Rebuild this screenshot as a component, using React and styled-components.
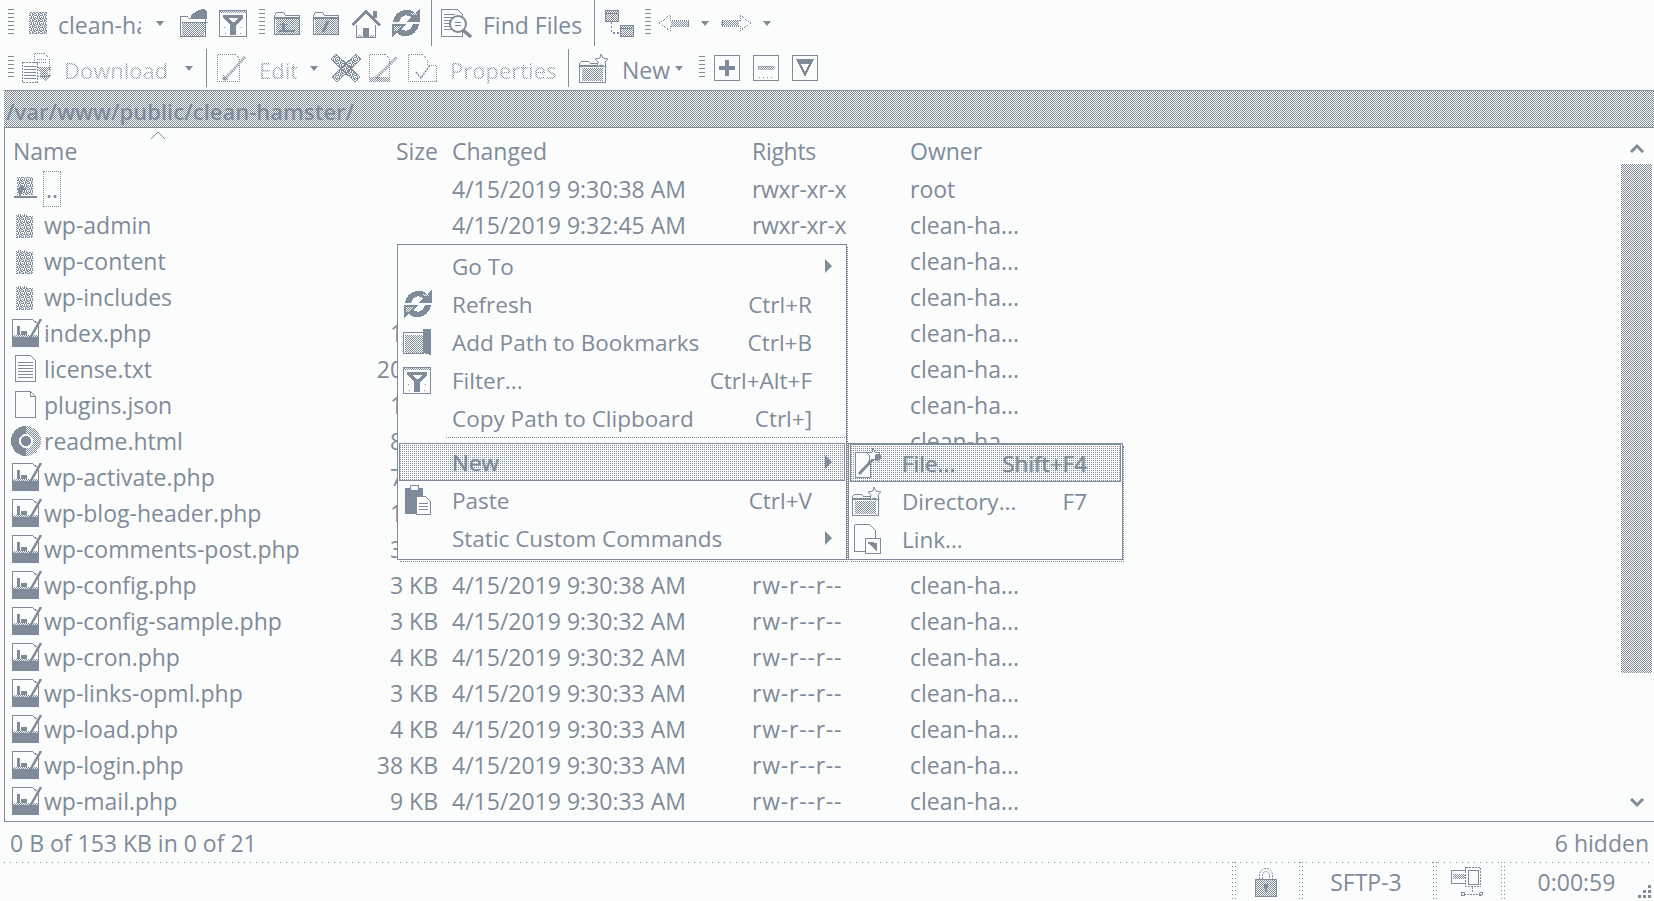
import React from "react";
import styled, { createGlobalStyle } from "styled-components";

const INK = "#7f8b99";
const PAPER = "#fbfdfd";
const CHECK = `repeating-conic-gradient(${INK} 0 25%, ${PAPER} 0 50%) 0 0 / 2px 2px`;
const FONT = `"Open Sans", "Noto Sans", sans-serif`;

const Global = createGlobalStyle`
  html, body { margin: 0; padding: 0; background: ${PAPER}; overflow: hidden; }
  body { font-family: ${FONT}; color: ${INK}; }
`;

const Window = styled.div`
  position: relative;
  width: 1654px;
  height: 901px;
  display: flex;
  flex-direction: column;
  overflow: hidden;
  font-size: 23px;
`;

const Toolbar = styled.div`
  display: flex;
  align-items: center;
  height: ${(p) => p.$h}px;
  flex: none;
`;

const Slot = styled.div`
  margin-left: ${(p) => p.$ml || 0}px;
  flex: none;
  display: flex;
  align-items: center;
`;

const Grip = styled.div`
  margin-left: ${(p) => p.$ml || 0}px;
  width: 6px;
  height: ${(p) => p.$h || 28}px;
  flex: none;
  background: repeating-linear-gradient(${INK} 0 1px, transparent 1px 4px);
`;

const Sep = styled.div`
  margin-left: ${(p) => p.$ml || 0}px;
  width: 1px;
  height: ${(p) => p.$h}px;
  flex: none;
  background: ${INK};
`;

const Caret = styled.div`
  margin-left: ${(p) => p.$ml || 0}px;
  width: 0;
  height: 0;
  flex: none;
  border-left: 4.5px solid transparent;
  border-right: 4.5px solid transparent;
  border-top: 5px solid ${INK};
`;

const Label = styled.div`
  margin-left: ${(p) => p.$ml || 0}px;
  width: ${(p) => p.$w}px;
  flex: none;
  overflow: hidden;
  white-space: nowrap;
  line-height: 30px;
  padding-top: 4px;
  ${(p) =>
    p.$dim &&
    `
    font-size: 22px;
    background: repeating-conic-gradient(${INK} 0 25%, ${PAPER} 0 50%) 0 0 / 2px 2px;
    -webkit-background-clip: text;
    background-clip: text;
    color: transparent;
  `}
`;

const PathBar = styled.div`
  height: 38px;
  margin-left: 4px;
  flex: none;
  box-sizing: border-box;
  border-top: 1px solid ${INK};
  border-bottom: 1px solid ${INK};
  background: ${CHECK};
  padding: 2px 0 0 2px;
  line-height: 36px;
  font-size: 22px;
  font-weight: 600;
`;

const Panel = styled.div`
  position: relative;
  flex: none;
  height: 694px;
  margin-left: 4px;
  box-sizing: border-box;
  border-left: 1px solid ${INK};
  border-bottom: 1px solid ${INK};
`;

const Row = styled.div`
  display: flex;
  align-items: center;
  height: 36px;
  padding-bottom: 3px;
  box-sizing: border-box;
  white-space: nowrap;
`;

const HeaderRow = styled(Row)`
  height: 44px;
  padding-top: 4px;
`;

const NameCell = styled.div`
  width: 371px;
  flex: none;
  display: flex;
  align-items: center;
  padding-left: ${(p) => p.$pad || 5}px;
  box-sizing: border-box;
`;

const Name = styled.span`
  margin-left: 2px;
  ${(p) => p.$focus && `outline: 1px dotted ${INK}; outline-offset: 0; padding: 1px 2px;`}
`;

const SizeCell = styled.div`
  width: 62px;
  flex: none;
  text-align: right;
`;

const ChangedCell = styled.div`
  width: 300px;
  flex: none;
  margin-left: 14px;
`;

const RightsCell = styled.div`
  width: 158px;
  flex: none;
  letter-spacing: ${(p) => (p.$dir ? "-0.3px" : "0.8px")};
`;

const OwnerCell = styled.div`
  flex: none;
`;

const SortMark = styled.svg`
  position: absolute;
  left: 145px;
  top: 3px;
`;

const Thumb = styled.div`
  position: absolute;
  right: 2px;
  top: 36px;
  width: 31px;
  height: 509px;
  background: ${CHECK};
`;

const Chevron = styled.svg`
  position: absolute;
  right: 9px;
  top: ${(p) => p.$top}px;
`;

const StatusTop = styled.div`
  flex: none;
  height: 40px;
  display: flex;
  align-items: center;
  justify-content: space-between;
  padding: 2px 5px 0 10px;
  box-sizing: border-box;
`;

const StatusBottom = styled.div`
  flex: none;
  height: 39px;
  margin-left: 4px;
  display: flex;
  justify-content: flex-end;
  background: repeating-linear-gradient(90deg, ${INK} 0 1px, transparent 1px 6px) 0 0 / 100% 1px no-repeat;
  position: relative;
`;

const StatusCell = styled.div`
  width: ${(p) => p.$w}px;
  flex: none;
  display: flex;
  align-items: center;
  justify-content: center;
  box-sizing: border-box;
  background:
    repeating-linear-gradient(${INK} 0 1px, transparent 1px 4px) 0 0 / 1px 100% no-repeat,
    repeating-linear-gradient(${INK} 0 1px, transparent 1px 4px) 3px 0 / 1px 100% no-repeat;
  padding-right: ${(p) => p.$pr || 0}px;
`;

const ResizeGrip = styled.svg`
  position: absolute;
  right: 2px;
  bottom: 1px;
`;

const Menu = styled.div`
  position: absolute;
  left: ${(p) => p.$x}px;
  top: ${(p) => p.$y}px;
  width: ${(p) => p.$w}px;
  height: ${(p) => p.$h}px;
  padding: ${(p) => p.$pad}px 1px 0;
  box-sizing: border-box;
  background: ${PAPER};
  border: 1px solid ${INK};
  font-size: 22.5px;
  &::after {
    content: "";
    position: absolute;
    left: 2px;
    top: 2px;
    right: -2px;
    bottom: -3px;
    border-right: 1px dotted ${INK};
    border-bottom: 1px dotted ${INK};
    pointer-events: none;
  }
`;

const MenuRow = styled.div`
  position: relative;
  display: flex;
  align-items: center;
  height: 38px;
  box-sizing: border-box;
  white-space: nowrap;
  ${(p) =>
    p.$active &&
    `
    outline: 1px solid ${INK};
    outline-offset: -1px;
    background: conic-gradient(${INK} 25%, transparent 0) 0 0 / 2px 2px, ${PAPER};
    text-shadow: 0 0 1px ${INK};
  `}
`;

const MenuIcon = styled.div`
  width: ${(p) => p.$w}px;
  padding-left: ${(p) => p.$pl}px;
  box-sizing: border-box;
  flex: none;
  display: flex;
  justify-content: flex-start;
`;

const MenuText = styled.div`
  flex: 1;
`;

const MenuKey = styled.div`
  flex: none;
  margin-right: ${(p) => p.$mr}px;
`;

const MenuArrow = styled.div`
  position: absolute;
  right: 13px;
  top: 50%;
  margin-top: -7px;
  width: 0;
  height: 0;
  border-top: 7px solid transparent;
  border-bottom: 7px solid transparent;
  border-left: 7px solid ${INK};
`;

const MenuRule = styled.div`
  height: 6px;
  margin-left: 47px;
  box-sizing: border-box;
  border-top: 1px dotted ${INK};
`;

const PatternDefs = styled.svg`
  position: absolute;
  width: 0;
  height: 0;
`;

const Glyph = ({ w = 30, h = 30, vw, vh, children }) => (
  <svg
    width={w}
    height={h}
    viewBox={`0 0 ${vw || w} ${vh || h}`}
    fill="none"
    stroke={INK}
    strokeWidth="1"
    shapeRendering="crispEdges"
    style={{ display: "block", flex: "none" }}
  >
    {children}
  </svg>
);

// file list icons
const DirIcon = () => (
  <Glyph w={32} h={32}>
    <path d="M6 5h9l2 2h6v22H6z" fill="url(#nz)" stroke="none" />
  </Glyph>
);
const UpDirIcon = () => (
  <Glyph w={32} h={32}>
    <path d="M7 4h16v18H7z" fill="url(#nz)" stroke="none" />
    <path d="M5 22h5v-6H7l5-5 5 5h-3v2h-2v4h16v2H5z" fill={INK} stroke="none" transform="translate(-1 1)" />
  </Glyph>
);
const PhpIcon = () => (
  <Glyph w={32} h={32}>
    <path d="M2.500 2.500h20l6 5v22h-26z" fill={PAPER} />
    <path d="M3 20h25v9H3z" fill={INK} stroke="none" />
    <path d="M3 18h25v2H3z" fill="url(#dt)" stroke="none" />
    <path d="M7 9h3v9H7zM11 14h6v4h-6z" fill={INK} stroke="none" />
    <path d="M19 23L31 2" stroke={INK} strokeWidth="2.500" shapeRendering="auto" />
  </Glyph>
);
const TextIcon = () => (
  <Glyph w={32} h={32}>
    <path d="M5.500 2.500h15l5 5v21h-20z" />
    <path d="M8 9.500h15M8 12.500h15M8 15.500h15M8 18.500h15M8 21.500h15M8 24.500h15" />
  </Glyph>
);
const BlankIcon = () => (
  <Glyph w={32} h={32}>
    <path d="M5.500 2.500h15l5 5v21h-20z" />
    <path d="M20.500 2.500v5h5" />
  </Glyph>
);
const WebIcon = () => (
  <Glyph w={32} h={32}>
    <circle cx="16" cy="16" r="15" fill="url(#dt)" stroke="none" />
    <path d="M16 1A15 15 0 0 0 16 31z" fill={INK} stroke="none" />
    <circle cx="16" cy="16" r="7" fill={PAPER} stroke="none" />
    <circle cx="16" cy="16" r="5" fill={INK} stroke="none" />
  </Glyph>
);

// toolbar icons
const SmallDir = () => (
  <Glyph w={18} h={24}>
    <path d="M0 1h18v22H0z" fill="url(#nz)" stroke="none" />
  </Glyph>
);
const OpenDir = () => (
  <Glyph w={30} h={30}>
    <path d="M1.500 8.500h7l2 2h16v18h-25z" />
    <path d="M3 15h24l-2 13H3z" fill="url(#dt)" stroke="none" />
    <path d="M12 8c3-4 8-7 13-7l3 2v8H13z" fill={INK} stroke="none" />
    <path d="M2.500 14.500h26" />
  </Glyph>
);
const FilterIcon = () => (
  <Glyph w={28} h={27}>
    <path d="M.5.500h27v26H.5z" fill={PAPER} />
    <path d="M1 1h26v2H1z" fill="url(#dt)" stroke="none" />
    <path d="M4 5h20v3l-7 7v10h-6V15L4 8z" fill={INK} stroke="none" />
    <path d="M9 8h10l-4 4h-2z" fill={PAPER} stroke="none" />
    <path d="M5 17h1v1H5zM22 17h1v1h-1zM6 23h1v1H6zM21 23h1v1h-1z" fill={INK} stroke="none" />
  </Glyph>
);
const TabDir = ({ children }) => (
  <Glyph w={26} h={24}>
    <path d="M.5 4.500l2-3h7l2 3h14v19H.5z" fill={PAPER} />
    <path d="M1 6h24v2H1z" fill={INK} stroke="none" />
    <path d="M2 8h23v15H2z" fill="url(#dt)" stroke="none" />
    {children}
  </Glyph>
);
const ParentDir = () => (
  <TabDir>
    <path d="M5 19h16v2H5zM8 12h3v8H8zM6 13h7v1H6z" fill={INK} stroke="none" />
  </TabDir>
);
const RootDir = () => (
  <TabDir>
    <path d="M15 10l-5 11" stroke={INK} strokeWidth="3" shapeRendering="auto" />
  </TabDir>
);
const HomeIcon = () => (
  <Glyph w={32} h={30}>
    <path d="M1 16L16 2l15 14-2 2L16 6 3 18z" fill={INK} stroke="none" />
    <path d="M6.500 16.500v13h19v-13" />
    <path d="M13 20h6v10h-6z" fill={INK} stroke="none" />
    <path d="M23 3h4v7h-4z" fill={INK} stroke="none" />
    <path d="M8 27h4v2H8zM20 27h4v2h-4z" fill="url(#dt)" stroke="none" />
  </Glyph>
);
const RefreshIcon = () => (
  <Glyph w={30} h={30}>
    <path d="M2 14C3 6 10 1 17 2c3 0 5 1 7 3l5-4v13H15l5-5c-5-3-10-2-12 5z" fill={INK} stroke="none" />
    <path d="M28 16c-1 8-8 13-15 12-3 0-5-1-7-3l-5 4V16h14l-5 5c5 3 10 2 12-5z" fill={INK} stroke="none" />
    <path d="M3 18h8l-5 5H3z" fill="url(#pt)" stroke="none" />
    <path d="M20 5h6v2h-6z" fill="url(#pt)" stroke="none" />
  </Glyph>
);
const FindIcon = () => (
  <Glyph w={32} h={30}>
    <path d="M.5 1.500h16l5 5v22H.5z" />
    <path d="M3 6.500h11M3 9.500h11M3 12.500h7M3 15.500h7M3 18.500h7M3 21.500h7" />
    <circle cx="17" cy="16" r="8" fill={PAPER} strokeWidth="2" shapeRendering="auto" />
    <path d="M14 14.500h6M14 17.500h6" />
    <path d="M22 22l8 7" strokeWidth="3.500" shapeRendering="auto" />
  </Glyph>
);
const TreeIcon = () => (
  <Glyph w={30} h={30}>
    <path d="M1.500 2.500h13v11h-13z" fill="url(#dt)" />
    <path d="M1.500 5.500h13" />
    <path d="M16.500 17.500h13v11h-13z" fill="url(#dt)" />
    <path d="M16.500 20.500h13" />
    <path d="M7.500 14v11h8" strokeDasharray="2 2" strokeWidth="1.500" />
  </Glyph>
);
const BackIcon = () => (
  <Glyph w={30} h={18}>
    <path d="M.5 9L11 1v5h18v6H11v5z" strokeDasharray="1 1" />
    <path d="M12 7h18v5H12z" fill="url(#dt)" stroke="none" />
  </Glyph>
);
const ForwardIcon = () => (
  <Glyph w={30} h={18}>
    <path d="M29.500 9L19 1v5H1v6h18v5z" strokeDasharray="1 1" />
    <path d="M0 7h18v5H0z" fill="url(#dt)" stroke="none" />
  </Glyph>
);
const DownloadIcon = () => (
  <Glyph w={30} h={30}>
    <path d="M12.500.5h10l5 5v18h-15z" strokeDasharray="1 1" />
    <path d="M.5 9.500h15v20H.5z" fill={PAPER} strokeDasharray="2 1" />
    <path d="M2 13.500h12M2 16.500h12M2 19.500h12M2 22.500h12M2 25.500h12" />
    <path d="M15 6.500h10M15 9.500h10" strokeDasharray="1 1" />
    <path d="M16 14h13v3h-3v5h3l-6 7-7-7h3z" fill="url(#dt)" stroke="none" />
  </Glyph>
);
const EditIcon = () => (
  <Glyph w={30} h={30}>
    <path d="M.5 1.500h18l4 4v23H.5z" strokeDasharray="1 1" />
    <path d="M7 27L28 4" stroke={INK} strokeWidth="3" strokeDasharray="1 1" shapeRendering="auto" />
    <path d="M6 21l6 6H5z" fill="url(#dt)" stroke="none" />
  </Glyph>
);
const DeleteIcon = () => (
  <Glyph w={30} h={30}>
    <path d="M5 1l24 23-5 5L0 6z" fill="url(#nz)" />
    <path d="M25 1L1 24l5 5L30 6z" fill="url(#nz)" />
  </Glyph>
);
const EditTwoIcon = () => (
  <Glyph w={30} h={30}>
    <path d="M.5 1.500h16l4 4v23H.5z" strokeDasharray="1 1" />
    <path d="M1 24h19v4H1z" fill="url(#dt)" stroke="none" />
    <path d="M7 25L28 4" stroke={INK} strokeWidth="3" strokeDasharray="1 1" shapeRendering="auto" />
  </Glyph>
);
const PropsIcon = () => (
  <Glyph w={30} h={30}>
    <path d="M.5 1.500h14l5 5v6" strokeDasharray="1 1" />
    <path d="M.5 1.500v27h28v-16h-9" strokeDasharray="1 1" />
    <path d="M8 19l5 6 9-13" stroke={INK} strokeWidth="1.500" strokeDasharray="2 1" shapeRendering="auto" />
  </Glyph>
);
const NewDirIcon = () => (
  <Glyph w={30} h={30}>
    <path d="M.5 10.500l2-2h7l2 2h15v19H.5z" fill={PAPER} />
    <path d="M1 12h25v2H1z" fill={INK} stroke="none" />
    <path d="M3 15h21v13H3z" fill="url(#dt)" stroke="none" />
    <path d="M22 1l2 4 5 1-3 3 1 5-5-2-4 2 1-5-3-3 5-1z" fill={PAPER} shapeRendering="auto" />
  </Glyph>
);
const BoxIcon = ({ children }) => (
  <Glyph w={26} h={26}>
    <path d="M.5.500h25v25H.5z" />
    {children}
  </Glyph>
);
const PlusIcon = () => (
  <BoxIcon>
    <path d="M11 5h4v6h6v4h-6v6h-4v-6H5v-4h6z" fill={INK} stroke="none" />
  </BoxIcon>
);
const MinusIcon = () => (
  <BoxIcon>
    <path d="M5 11h16v3H5z" fill="url(#dt)" stroke={INK} strokeWidth=".5" />
    <path d="M6 22h1M10 22h1M14 22h1M18 22h1" />
  </BoxIcon>
);
const InvertIcon = () => (
  <BoxIcon>
    <path d="M4 4h18l-9 18zM9 9l4 8 4-8z" fill={INK} fillRule="evenodd" stroke="none" />
  </BoxIcon>
);

// menu icons
const BookmarkIcon = () => (
  <Glyph w={30} h={26}>
    <path d="M.5 3.500h20v21H.5z" />
    <path d="M2 6h18v18H2z" fill="url(#dt)" stroke="none" />
    <path d="M20 0h8v26l-8-2z" fill={INK} stroke="none" />
  </Glyph>
);
const PasteIcon = () => (
  <Glyph w={30} h={32}>
    <path d="M2 4h18v26H2z" fill={INK} stroke="none" />
    <path d="M7 1h8v5H7z" fill={PAPER} stroke={INK} />
    <path d="M5 8h14v6H5z" fill="url(#dt)" stroke="none" />
    <path d="M13.500 12.500h9l5 5v13h-14z" fill={PAPER} />
    <path d="M16 19.500h9M16 22.500h9M16 25.500h9" />
  </Glyph>
);
const NewFileIcon = () => (
  <Glyph w={32} h={32}>
    <path d="M3.500 5.500h15v25h-15z" fill={PAPER} />
    <path d="M7 27L24 9" stroke={INK} strokeWidth="3" shapeRendering="auto" />
    <path d="M21 1l2 4 5 1-3 3 1 5-5-2-4 2 1-5-3-3 5-1z" fill={PAPER} />
    <circle cx="26" cy="10" r="3" fill={INK} stroke="none" />
  </Glyph>
);
const LinkIcon = () => (
  <Glyph w={32} h={32}>
    <path d="M2.500 1.500h15l6 6v14M2.500 1.500v27h10" />
    <path d="M13.500 15.500h15v15h-15z" fill={PAPER} />
    <path d="M16 19h3l6 1v8l-3-2-3-4-3-1z" fill={INK} stroke="none" />
  </Glyph>
);
const LockIcon = () => (
  <Glyph w={24} h={32}>
    <path d="M5.500 13V9a6.500 6.500 0 0 1 13 0v4M8.500 13V9a3.500 3.500 0 0 1 7 0v4" strokeDasharray="2 1" shapeRendering="auto" />
    <path d="M1.500 13.500h21v17h-21z" fill="url(#dt)" />
    <path d="M10 18h4v3l-1 2v3h-2v-3l-1-2z" fill={INK} stroke="none" />
  </Glyph>
);
const NetIcon = () => (
  <Glyph w={32} h={32}>
    <path d="M.5 4.500h15v13H.5z" fill={PAPER} />
    <path d="M2 8h12v5H2z" fill="url(#dt)" stroke="none" />
    <path d="M14.500 1.500h15v19h-15z" fill={PAPER} strokeDasharray="2 1" />
    <path d="M17 4h10v14H17z" fill={PAPER} />
    <path d="M21 21v6M13 28h17" strokeDasharray="2 1" />
    <circle cx="12" cy="28" r="2" />
    <circle cx="30" cy="28" r="1.500" />
  </Glyph>
);

const php = <PhpIcon />;
const dir = <DirIcon />;
const rows = [
  { icon: <UpDirIcon />, name: "..", focus: true, changed: "4/15/2019 9:30:38 AM", rights: "rwxr-xr-x", owner: "root" },
  { icon: dir, name: "wp-admin", changed: "4/15/2019 9:32:45 AM", rights: "rwxr-xr-x", owner: "clean-ha..." },
  { icon: dir, name: "wp-content", changed: "4/15/2019 9:30:32 AM", rights: "rwxr-xr-x", owner: "clean-ha..." },
  { icon: dir, name: "wp-includes", changed: "4/15/2019 9:30:33 AM", rights: "rwxr-xr-x", owner: "clean-ha..." },
  { icon: php, name: "index.php", size: "1 KB", changed: "4/15/2019 9:30:38 AM", rights: "rw-r--r--", owner: "clean-ha..." },
  { icon: <TextIcon />, name: "license.txt", size: "20 KB", changed: "4/15/2019 9:30:38 AM", rights: "rw-r--r--", owner: "clean-ha..." },
  { icon: <BlankIcon />, name: "plugins.json", size: "1 KB", changed: "4/15/2019 9:30:38 AM", rights: "rw-r--r--", owner: "clean-ha..." },
  { icon: <WebIcon />, name: "readme.html", size: "8 KB", changed: "4/15/2019 9:30:38 AM", rights: "rw-r--r--", owner: "clean-ha..." },
  { icon: php, name: "wp-activate.php", size: "7 KB", changed: "4/15/2019 9:30:38 AM", rights: "rw-r--r--", owner: "clean-ha..." },
  { icon: php, name: "wp-blog-header.php", size: "1 KB", changed: "4/15/2019 9:30:38 AM", rights: "rw-r--r--", owner: "clean-ha..." },
  { icon: php, name: "wp-comments-post.php", size: "3 KB", changed: "4/15/2019 9:30:38 AM", rights: "rw-r--r--", owner: "clean-ha..." },
  { icon: php, name: "wp-config.php", size: "3 KB", changed: "4/15/2019 9:30:38 AM", rights: "rw-r--r--", owner: "clean-ha..." },
  { icon: php, name: "wp-config-sample.php", size: "3 KB", changed: "4/15/2019 9:30:32 AM", rights: "rw-r--r--", owner: "clean-ha..." },
  { icon: php, name: "wp-cron.php", size: "4 KB", changed: "4/15/2019 9:30:32 AM", rights: "rw-r--r--", owner: "clean-ha..." },
  { icon: php, name: "wp-links-opml.php", size: "3 KB", changed: "4/15/2019 9:30:33 AM", rights: "rw-r--r--", owner: "clean-ha..." },
  { icon: php, name: "wp-load.php", size: "4 KB", changed: "4/15/2019 9:30:33 AM", rights: "rw-r--r--", owner: "clean-ha..." },
  { icon: php, name: "wp-login.php", size: "38 KB", changed: "4/15/2019 9:30:33 AM", rights: "rw-r--r--", owner: "clean-ha..." },
  { icon: php, name: "wp-mail.php", size: "9 KB", changed: "4/15/2019 9:30:33 AM", rights: "rw-r--r--", owner: "clean-ha..." },
];

const menuItems = [
  { text: "Go To", arrow: true },
  { text: "Refresh", key: "Ctrl+R", icon: <RefreshIcon /> },
  { text: "Add Path to Bookmarks", key: "Ctrl+B", icon: <BookmarkIcon /> },
  { text: "Filter...", key: "Ctrl+Alt+F", icon: <FilterIcon /> },
  { text: "Copy Path to Clipboard", key: "Ctrl+]" },
  { rule: true },
  { text: "New", arrow: true, active: true },
  { text: "Paste", key: "Ctrl+V", icon: <PasteIcon /> },
  { text: "Static Custom Commands", arrow: true },
];

const subItems = [
  { text: "File...", key: "Shift+F4", icon: <NewFileIcon />, active: true },
  { text: "Directory...", key: "F7", icon: <NewDirIcon /> },
  { text: "Link...", icon: <LinkIcon /> },
];

export default function App() {
  return (
    <Window>
      <Global />
      <PatternDefs>
        <defs>
          <pattern id="dt" width="2" height="2" patternUnits="userSpaceOnUse">
            <rect width="1" height="1" fill={INK} />
            <rect x="1" y="1" width="1" height="1" fill={INK} />
          </pattern>
          <pattern id="pt" width="2" height="2" patternUnits="userSpaceOnUse">
            <rect width="2" height="2" fill={PAPER} />
            <rect width="1" height="1" fill={INK} />
            <rect x="1" y="1" width="1" height="1" fill={INK} />
          </pattern>
          <pattern id="nz" width="6" height="6" patternUnits="userSpaceOnUse">
            <path d="M0 0h1v1H0zM2 0h1v1H2zM4 0h1v1H4zM1 1h2v1H1zM4 1h2v1H4zM0 2h1v1H0zM3 2h1v1H3zM5 2h1v1H5zM1 3h1v1H1zM3 3h2v1H3zM0 4h2v1H0zM3 4h1v1H3zM5 4h1v1H5zM2 5h1v1H2zM4 5h1v1H4z" fill={INK} />
          </pattern>
        </defs>
      </PatternDefs>

      <Toolbar $h={46}>
        <Grip $ml={8} />
        <Slot $ml={15}><SmallDir /></Slot>
        <Label $ml={11} $w={83}>clean-hamster</Label>
        <Caret $ml={15} />
        <Slot $ml={15}><OpenDir /></Slot>
        <Slot $ml={10}><FilterIcon /></Slot>
        <Grip $ml={12} />
        <Slot $ml={9}><ParentDir /></Slot>
        <Slot $ml={13}><RootDir /></Slot>
        <Slot $ml={11}><HomeIcon /></Slot>
        <Slot $ml={9}><RefreshIcon /></Slot>
        <Sep $ml={10} $h={46} />
        <Slot $ml={9}><FindIcon /></Slot>
        <Label $ml={10} $w={100}>Find Files</Label>
        <Sep $ml={11} $h={46} />
        <Slot $ml={9}><TreeIcon /></Slot>
        <Grip $ml={11} />
        <Slot $ml={8}><BackIcon /></Slot>
        <Caret $ml={12} />
        <Slot $ml={12}><ForwardIcon /></Slot>
        <Caret $ml={12} />
      </Toolbar>

      <Toolbar $h={44}>
        <Grip $ml={8} $h={24} />
        <Slot $ml={8}><DownloadIcon /></Slot>
        <Label $ml={12} $w={106} $dim>Download</Label>
        <Caret $ml={15} />
        <Sep $ml={13} $h={38} />
        <Slot $ml={10}><EditIcon /></Slot>
        <Label $ml={12} $w={38} $dim>Edit</Label>
        <Caret $ml={13} />
        <Slot $ml={13}><DeleteIcon /></Slot>
        <Slot $ml={8}><EditTwoIcon /></Slot>
        <Slot $ml={9}><PropsIcon /></Slot>
        <Label $ml={12} $w={106} $dim>Properties</Label>
        <Sep $ml={12} $h={38} />
        <Slot $ml={10}><NewDirIcon /></Slot>
        <Label $ml={13} $w={48}>New</Label>
        <Caret $ml={5} />
        <Grip $ml={16} $h={24} />
        <Slot $ml={9}><PlusIcon /></Slot>
        <Slot $ml={13}><MinusIcon /></Slot>
        <Slot $ml={13}><InvertIcon /></Slot>
      </Toolbar>

      <PathBar>/var/www/public/clean-hamster/</PathBar>

      <Panel>
        <SortMark width="16" height="9" viewBox="0 0 16 9" fill="none" stroke={INK}>
          <path d="M1 8l7-7 7 7" />
        </SortMark>
        <HeaderRow>
          <NameCell $pad={8}>Name</NameCell>
          <SizeCell>Size</SizeCell>
          <ChangedCell>Changed</ChangedCell>
          <RightsCell $dir>Rights</RightsCell>
          <OwnerCell>Owner</OwnerCell>
        </HeaderRow>
        {rows.map((r) => (
          <Row key={r.name}>
            <NameCell>
              {r.icon}
              <Name $focus={r.focus}>{r.name}</Name>
            </NameCell>
            <SizeCell>{r.size}</SizeCell>
            <ChangedCell>{r.changed}</ChangedCell>
            <RightsCell $dir={r.rights.startsWith("rwx")}>{r.rights}</RightsCell>
            <OwnerCell>{r.owner}</OwnerCell>
          </Row>
        ))}
        <Chevron $top={15} width="16" height="10" viewBox="0 0 16 10" fill="none" stroke={INK} strokeWidth="3">
          <path d="M2 9l6-6 6 6" />
        </Chevron>
        <Thumb />
        <Chevron $top={670} width="16" height="10" viewBox="0 0 16 10" fill="none" stroke={INK} strokeWidth="3">
          <path d="M2 1l6 6 6-6" />
        </Chevron>
      </Panel>

      <StatusTop>
        <span>0 B of 153 KB in 0 of 21</span>
        <span>6 hidden</span>
      </StatusTop>

      <StatusBottom>
        <StatusCell $w={67}><LockIcon /></StatusCell>
        <StatusCell $w={134}>SFTP-3</StatusCell>
        <StatusCell $w={68}><NetIcon /></StatusCell>
        <StatusCell $w={153} $pr={2}>0:00:59</StatusCell>
        <ResizeGrip width="16" height="16" viewBox="0 0 16 16" fill={INK}>
          <path d="M12 1h3v3h-3zM7 6h3v3H7zM12 6h3v3h-3zM2 11h3v3H2zM7 11h3v3H7zM12 11h3v3h-3z" />
        </ResizeGrip>
      </StatusBottom>

      <Menu $x={397} $y={244} $w={450} $h={316} $pad={2}>
        {menuItems.map((m, i) =>
          m.rule ? (
            <MenuRule key={i} />
          ) : (
            <MenuRow key={m.text} $active={m.active}>
              <MenuIcon $w={53} $pl={4}>{m.icon}</MenuIcon>
              <MenuText>{m.text}</MenuText>
              {m.key && <MenuKey $mr={33}>{m.key}</MenuKey>}
              {m.arrow && <MenuArrow />}
            </MenuRow>
          )
        )}
      </Menu>

      <Menu $x={848} $y={443} $w={275} $h={117} $pad={0}>
        {subItems.map((m) => (
          <MenuRow key={m.text} $active={m.active}>
            <MenuIcon $w={52} $pl={2}>{m.icon}</MenuIcon>
            <MenuText>{m.text}</MenuText>
            {m.key && <MenuKey $mr={34}>{m.key}</MenuKey>}
          </MenuRow>
        ))}
      </Menu>
    </Window>
  );
}
